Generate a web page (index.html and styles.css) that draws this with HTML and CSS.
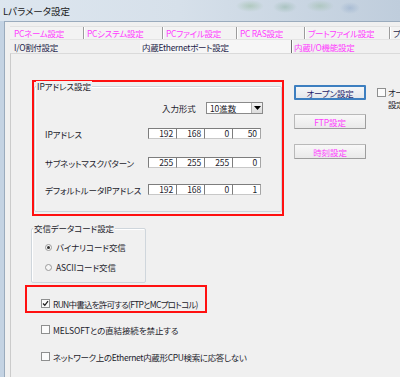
FILE: index.html
```html
<!DOCTYPE html>
<html lang="ja">
<head>
<meta charset="utf-8">
<title>Lパラメータ設定</title>
<link rel="stylesheet" href="styles.css">
</head>
<body>
<div class="frame">
  <div class="titlebar"><span class="title">Lパラメータ設定</span></div>
  <div class="client">
    <div class="tabs">
      <div class="tabrow row1">
        <div class="tab pink t1a">PCネーム設定</div>
        <div class="tab pink sep t1b">PCシステム設定</div>
        <div class="tab pink sep t1c">PCファイル設定</div>
        <div class="tab pink sep t1d">PC RAS設定</div>
        <div class="tab pink sep t1e">ブートファイル設定</div>
        <div class="tab navy sep t1f">プロ</div>
      </div>
      <div class="tabrow row2">
        <div class="tab navy t2a">I/O割付設定</div>
        <div class="tab navy sel t2b">内蔵Ethernetポート設定</div>
        <div class="tab pink sep dark t2c">内蔵I/O機能設定</div>
      </div>
    </div>
    <div class="panel">
      <div class="leftcol">
        <div class="redbox box1">
          <div class="group ipgroup">
            <span class="legend">IPアドレス設定</span>
            <div class="fmtrow">
              <span class="fmtlabel">入力形式</span>
              <div class="select"><span class="selval">10進数</span><span class="selbtn"><svg width="7" height="4" viewBox="0 0 7 4"><path d="M0 0H7L3.5 4Z" fill="#000"/></svg></span></div>
            </div>
            <div class="iprow r1">
              <span class="iplabel">IPアドレス</span>
              <div class="octets"><span class="oct">192</span><span class="oct">168</span><span class="oct">0</span><span class="oct">50</span></div>
            </div>
            <div class="iprow r2">
              <span class="iplabel">サブネットマスクパターン</span>
              <div class="octets"><span class="oct">255</span><span class="oct">255</span><span class="oct">255</span><span class="oct">0</span></div>
            </div>
            <div class="iprow r3">
              <span class="iplabel">デフォルトルータIPアドレス</span>
              <div class="octets"><span class="oct">192</span><span class="oct">168</span><span class="oct">0</span><span class="oct">1</span></div>
            </div>
          </div>
        </div>
        <div class="group codegroup">
          <span class="legend">交信データコード設定</span>
          <div class="radiorow rr1"><span class="radio on"></span><span>バイナリコード交信</span></div>
          <div class="radiorow rr2"><span class="radio"></span><span>ASCIIコード交信</span></div>
        </div>
        <div class="redbox box2">
          <div class="checkrow"><span class="check on"><svg width="7" height="7" viewBox="0 0 7 7"><path d="M1 3.5L2.8 5.3L6 1.2" fill="none" stroke="#222" stroke-width="1.3"/></svg></span><span class="tight">RUN中書込を許可する(FTPとMCプロトコル)</span></div>
        </div>
        <div class="checkrow cr2"><span class="check"></span><span>MELSOFTとの直結接続を禁止する</span></div>
        <div class="checkrow cr3"><span class="check"></span><span class="semitight">ネットワーク上のEthernet内蔵形CPU検索に応答しない</span></div>
      </div>
      <div class="btncol">
        <div class="btn focus b1">オープン設定</div>
        <div class="btn pinktext b2">FTP設定</div>
        <div class="btn pinktext b3">時刻設定</div>
      </div>
      <div class="farcol">
        <span class="check"></span>
        <span class="fartext">オー<br>設定</span>
      </div>
    </div>
  </div>
</div>
</body>
</html>
```

FILE: styles.css
```css
* { box-sizing: border-box; }
html, body { margin: 0; padding: 0; }
body {
  width: 400px;
  height: 377px;
  overflow: hidden;
  background: #c4d3e3;
  font-family: "Noto Sans CJK JP", "Noto Sans", sans-serif;
  font-size: 8.5px;
  line-height: 10px;
  color: #1c1c2c;
  font-feature-settings: "palt";
  letter-spacing: -0.1px;
}
.frame { display: flex; flex-direction: column; height: 377px; }
.titlebar {
  height: 21px;
  flex-shrink: 0;
  padding-left: 3px;
  display: flex;
  align-items: center;
  background:
    radial-gradient(ellipse 14px 6px at 250px 6px, rgba(120,170,120,0.35), transparent),
    radial-gradient(ellipse 12px 6px at 285px 7px, rgba(110,160,130,0.35), transparent),
    radial-gradient(ellipse 14px 6px at 320px 6px, rgba(120,170,120,0.3), transparent),
    radial-gradient(ellipse 10px 6px at 350px 8px, rgba(120,150,190,0.35), transparent),
    linear-gradient(90deg, #dde6ef 0%, #d6e0ea 45%, #bfcddc 100%);
}
.title { font-size: 9.5px; color: #1a1a1a; letter-spacing: 0; }
.client {
  flex: 1;
  margin-left: 4px;
  background: #f0f0f0;
  border-top: 1px solid #9aabbd;
  border-left: 1px solid #9aabbd;
  padding-top: 4px;
  display: flex;
  flex-direction: column;
}
.tabs { margin-left: 5px; }
.tabrow { display: flex; white-space: nowrap; }
.row1 { height: 13px; background: #f3f3f3; border-top: 1px solid #e2e2e2; }
.row2 { height: 14px; background: #f0f0f0; border-top: 1px solid #e4e4e4; }
.tab {
  flex-shrink: 0;
  padding-left: 3px;
  display: flex;
  align-items: center;
  overflow: hidden;
  letter-spacing: -0.3px;
}
.tab.sep { border-left: 1px solid #9c9c9c; box-shadow: inset 1px 0 0 #ffffff; }
.tab.dark { border-left: 1px solid #6f6f6f; }
.pink { color: #ff3cff; }
.navy { color: #1e1e4a; }
.t1a { width: 73px; padding-left: 4px; }
.t1b { width: 79px; }
.t1c { width: 74px; }
.t1d { width: 68px; }
.t1e { width: 85px; }
.t1f { width: 11px; }
.t2a { width: 130px; padding-left: 4px; }
.t2b { width: 151px; padding-left: 2px; background: #f6f6f6; }
.t2c { width: 109px; padding-left: 2px; }
.panel {
  flex: 1;
  margin-left: 5px;
  border-left: 1px solid #cbcbcb;
  border-top: 1px solid #dadada;
  display: flex;
  align-items: flex-start;
}
.leftcol { width: 273px; flex-shrink: 0; padding-left: 14px; display: flex; flex-direction: column; align-items: flex-start; }
.redbox { border: 2px solid #ff1010; }
.box1 { margin-left: 7px; margin-top: 26px; width: 252px; height: 136px; padding-top: 4px; }
.group {
  position: relative;
  border: 1px solid #cfd6dc;
  border-radius: 2px;
  box-shadow: inset 1px 1px 0 #ffffff;
}
.legend {
  position: absolute;
  top: -6px;
  left: 1px;
  padding: 0 1px;
  background: #f0f0f0;
  white-space: nowrap;
}
.ipgroup { width: 248px; height: 126px; }
.fmtrow { display: flex; align-items: center; margin-top: 15px; padding-left: 127px; height: 12px; }
.fmtlabel { width: 44px; }
.select {
  width: 57px;
  height: 12px;
  border: 1px solid #8a8a8a;
  background: #ffffff;
  display: flex;
  align-items: center;
  justify-content: space-between;
}
.selval { padding-left: 3px; }
.selbtn {
  width: 11px;
  height: 10px;
  background: linear-gradient(#f4f4f4, #dcdcdc);
  border-left: 1px solid #b0b0b0;
  display: flex;
  align-items: center;
  justify-content: center;
}
.iprow { display: flex; align-items: center; padding-left: 10px; height: 11px; }
.r1 { margin-top: 14px; }
.r2 { margin-top: 18px; }
.r3 { margin-top: 16px; }
.iplabel { width: 103px; white-space: nowrap; }
.octets { display: flex; }
.oct {
  width: 29px;
  height: 11px;
  margin-left: -1px;
  border: 1px solid #7d7d7d;
  border-right-color: #a5a5a5;
  border-bottom-color: #c8c8c8;
  background: #ffffff;
  text-align: right;
  padding-right: 3px;
  line-height: 9px;
}
.oct:first-child { margin-left: 0; }
.codegroup { margin-left: 6px; margin-top: 12px; width: 115px; height: 55px; }
.radiorow { display: flex; align-items: center; height: 10px; padding-left: 13px; gap: 4px; white-space: nowrap; }
.rr1 { margin-top: 13px; }
.rr2 { margin-top: 10px; }
.radio {
  width: 7px;
  height: 7px;
  border-radius: 50%;
  border: 1px solid #9a9a9a;
  background: #f6f6f6;
  display: flex;
  align-items: center;
  justify-content: center;
}
.radio.on::after { content: ""; width: 3px; height: 3px; border-radius: 50%; background: #333; }
.box2 { margin-top: 2px; width: 182px; height: 28px; padding-top: 12px; }
.checkrow { display: flex; align-items: center; height: 9px; padding-left: 14px; gap: 3px; white-space: nowrap; }
.cr2 { margin-top: 12px; padding-left: 16px; }
.cr3 { margin-top: 18px; padding-left: 16px; }
.tight { letter-spacing: -0.75px; }
.semitight { letter-spacing: -0.35px; }
.check {
  width: 9px;
  height: 9px;
  flex-shrink: 0;
  border: 1px solid #8e8f8f;
  background: #fbfbfb;
  display: flex;
  align-items: center;
  justify-content: center;
}
.btncol { width: 82px; flex-shrink: 0; padding-left: 10px; padding-top: 31px; display: flex; flex-direction: column; }
.btn {
  width: 72px;
  height: 15px;
  border: 1px solid #b9b9b9;
  border-right-color: #9d9d9d;
  border-bottom-color: #9d9d9d;
  border-radius: 1px;
  background: linear-gradient(#f8f8f8, #e9e9e9);
  display: flex;
  align-items: center;
  justify-content: center;
  white-space: nowrap;
}
.btn.focus { border: 2px solid #3d7fc0; color: #1e1e6a; background: linear-gradient(#f4f6f8, #e4e8ec); }
.pinktext { color: #ff3cff; }
.b2 { margin-top: 14px; }
.b3 { margin-top: 15px; }
.farcol { flex-shrink: 0; width: 36px; padding-left: 11px; padding-top: 34px; display: flex; align-items: flex-start; gap: 2px; white-space: nowrap; }
.fartext { line-height: 12px; margin-top: -2px; letter-spacing: -0.5px; }
```
